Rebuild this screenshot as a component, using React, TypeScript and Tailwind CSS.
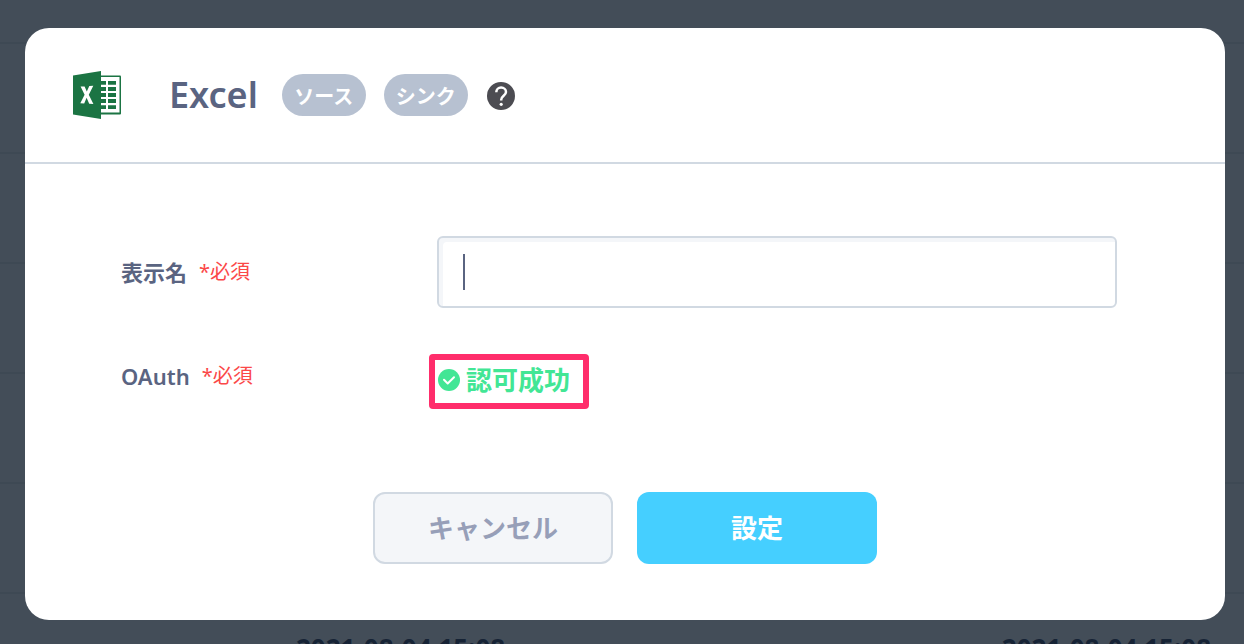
import { useState, type FormEvent, type ReactNode } from 'react';

const ROWS = ['a', 'b', 'c', 'd', 'e', 'f'];
const UPDATED_AT = '2021-08-04 15:08';

function ExcelLogo() {
  return (
    <svg width="48" height="48" viewBox="0 0 48 48" aria-hidden="true" className="shrink-0">
      <path d="M27 4.500h20a1 1 0 0 1 1 1v37a1 1 0 0 1-1 1H27z" fill="#1b7443" />
      <path d="M27 6h19.500v35.500H27z" fill="#fff" />
      <path
        d="M27 10h6v3.700h-6zM35 10h8v3.700h-8zM27 16h6v4h-6zM35 16h8v4h-8zM27 22h6v4h-6zM35 22h8v4h-8zM27 28h6v4h-6zM35 28h8v4h-8zM27 34.300h6V38h-6zM35 34.300h8V38h-8z"
        fill="#1b7443"
      />
      <path d="M0 4.500 28 0v48L0 43.500z" fill="#1b7443" />
      <path
        d="m7.600 15.600 4-.2 2.200 5.100 2.500-5.400 4-.3-4.500 9 4.600 9.200-4.200-.3-2.600-5.900-2.400 5.600-3.900-.2 4.300-8.400z"
        fill="#fff"
      />
    </svg>
  );
}

function HelpIcon() {
  return (
    <svg width="28" height="28" viewBox="0 0 28 28" aria-hidden="true">
      <circle cx="14" cy="14" r="14" fill="#4c4c52" />
      <path
        d="M9.300 10.200C9.300 7.400 11.300 5.600 14.100 5.600s4.900 1.800 4.900 4.400c0 3.600-4.800 3.900-4.800 7.700v.9"
        fill="none"
        stroke="#fff"
        strokeWidth="2.500"
      />
      <circle cx="14.200" cy="22.300" r="1.600" fill="#fff" />
    </svg>
  );
}

function CheckIcon() {
  return (
    <svg width="22" height="22" viewBox="0 0 22 22" aria-hidden="true" className="shrink-0">
      <circle cx="11" cy="11" r="11" fill="#42e695" />
      <path
        d="m6 10.800 3.700 3.700 6.300-6.300"
        fill="none"
        stroke="#fff"
        strokeWidth="2"
        strokeLinecap="round"
        strokeLinejoin="round"
      />
    </svg>
  );
}

function Badge({ children }: { children: ReactNode }) {
  return (
    <span className="flex h-[42px] w-[84px] items-center justify-center rounded-full bg-[#b7c1d1] pt-1 text-[20px] font-bold text-white">
      {children}
    </span>
  );
}

function Required() {
  return <span className="text-[20px] leading-8 font-normal text-[#fb4848]">*必須</span>;
}

// Table that stays visible behind the overlay
function HistoryTable() {
  return (
    <table className="w-full table-fixed text-[26px] font-bold text-[#162335]">
      <tbody>
        <tr className="h-[43px] border-b-2 border-[#3e4954]">
          <td />
          <td />
        </tr>
        {ROWS.map((row, i) => (
          <tr key={row} className="h-[110px] border-b-2 border-[#3e4954]">
            <td className="pl-[296px] whitespace-nowrap">{i === 5 && UPDATED_AT}</td>
            <td className="pr-[33px] text-right whitespace-nowrap">{i === 5 && UPDATED_AT}</td>
          </tr>
        ))}
      </tbody>
    </table>
  );
}

export default function App() {
  const [name, setName] = useState('');

  function onSubmit(e: FormEvent) {
    e.preventDefault();
  }

  return (
    <div className="relative h-screen overflow-hidden bg-[#434d58] font-['Noto_Sans','Noto_Sans_CJK_JP',sans-serif] text-[#5a6481]">
      <HistoryTable />

      <div className="absolute inset-0 pt-7 pr-[19px] pl-[25px]">
        <div role="dialog" aria-labelledby="dialog-title" className="rounded-3xl bg-white">
          <header className="flex h-[136px] items-center border-b-2 border-[#d1d9e2] px-12">
            <ExcelLogo />
            <h1 id="dialog-title" className="ml-12 text-[36px] leading-[48px] font-semibold">
              Excel
            </h1>
            <div className="ml-6 flex gap-[18px]">
              <Badge>ソース</Badge>
              <Badge>シンク</Badge>
            </div>
            <button type="button" aria-label="ヘルプ" className="ml-[19px] pt-0.5">
              <HelpIcon />
            </button>
          </header>

          <form onSubmit={onSubmit} className="pt-[72px] pb-14">
            <div className="flex items-center pr-[108px] pl-24">
              <label
                htmlFor="display-name"
                className="flex w-[316px] shrink-0 items-center gap-3 text-[22px] leading-8 font-bold"
              >
                表示名
                <Required />
              </label>
              <div className="relative flex-1">
                <input
                  id="display-name"
                  type="text"
                  value={name}
                  onChange={(e) => setName(e.target.value)}
                  className="block h-[72px] w-full rounded-md border-2 border-[#d1d9e2] px-6 text-[24px] caret-transparent shadow-[inset_4px_4px_0_#f4f6f9] outline-none"
                />
                {name === '' && (
                  <span className="pointer-events-none absolute top-[18px] left-[26px] h-9 w-0.5 bg-[#5a6481]" />
                )}
              </div>
            </div>

            <div className="mt-[46px] flex items-start pr-[108px] pl-24">
              <div className="flex w-[308px] shrink-0 items-center gap-3 pt-1.5 text-[22px] leading-8 font-semibold">
                OAuth
                <Required />
              </div>
              <p className="flex h-[55px] w-40 items-center gap-1.5 rounded-sm border-6 border-[#ff2d6b] pb-1 pl-[3px] text-[26px] leading-9 font-bold whitespace-nowrap text-[#42e695]">
                <CheckIcon />
                認可成功
              </p>
            </div>

            <div className="mt-[83px] flex justify-center gap-6 text-[26px] font-bold">
              <button
                type="button"
                className="h-[72px] w-60 rounded-xl border-2 border-[#d1d9e2] bg-[#f4f6f9] text-[#979fb8]"
              >
                キャンセル
              </button>
              <button type="submit" className="h-[72px] w-60 rounded-xl bg-[#45cfff] text-white">
                設定
              </button>
            </div>
          </form>
        </div>
      </div>
    </div>
  );
}
